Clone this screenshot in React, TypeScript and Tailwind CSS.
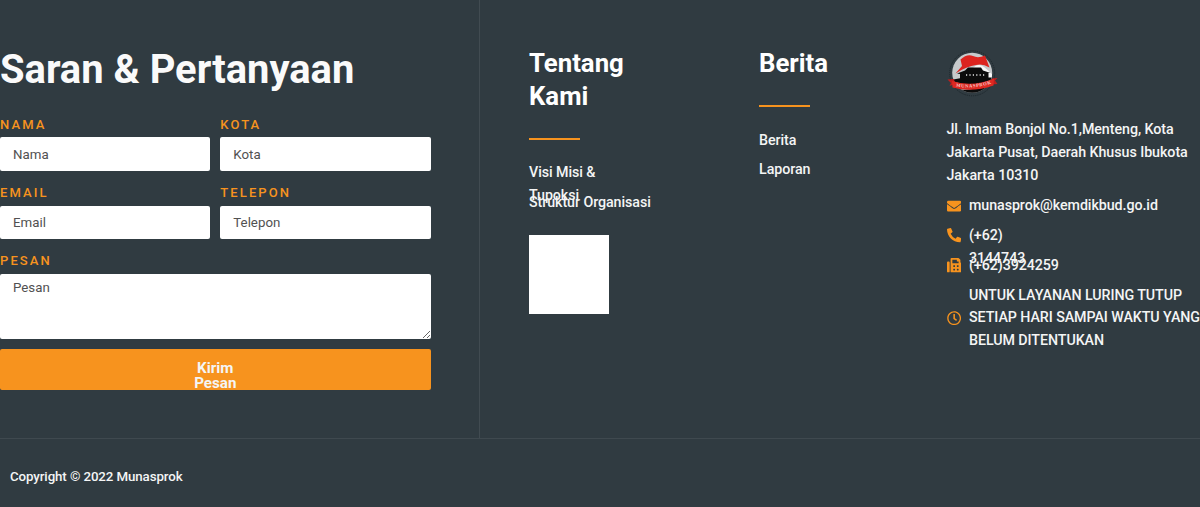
import type { ReactNode } from "react";
import { FaEnvelope, FaFax, FaPhoneAlt, FaRegClock } from "react-icons/fa";

function Label({ id, children }: { id: string; children: ReactNode }) {
  return (
    <label htmlFor={id} className="block h-[23px] text-[13px] leading-[21px] font-medium tracking-[2.1px] text-[#f7931e]">
      {children}
    </label>
  );
}

function Field({ id, label, name }: { id: string; label: string; name: string }) {
  return (
    <div className="h-[68.2px]">
      <Label id={id}>{label}</Label>
      <input
        id={id}
        placeholder={name}
        className="mt-[0.4px] block h-[33.6px] w-full rounded-[2px] bg-white px-[13px] text-[13.3px] text-[#444] placeholder:text-[#515151] outline-none"
      />
    </div>
  );
}

function Heading({ children }: { children: ReactNode }) {
  return (
    <>
      <h3 className="text-[25.75px] leading-[33.4px] font-bold tracking-normal text-white">{children}</h3>
      <div className="mt-[24.4px] mb-[21.6px] h-[2px] w-[51px] bg-[#f7931e]" />
    </>
  );
}

function Logo() {
  return (
    <svg viewBox="0 0 54 50" className="block h-[50px] w-[54px]">
      <defs>
        <clipPath id="disc">
          <circle cx="25.2" cy="24.8" r="20" />
        </clipPath>
        <path id="ribbonText" d="M9 38.5 Q25 41.5 43 36" />
      </defs>
      <circle cx="25.2" cy="25.3" r="22.5" fill="none" stroke="#1d272c" strokeWidth="1" strokeDasharray="1.2 1" />
      <circle cx="25.2" cy="24.8" r="20" fill="#c7cacc" />
      <g clipPath="url(#disc)">
        <path d="M25 21 Q31 14 37 19 T46 27 V33 H12Z" fill="#f8f8f8" />
        <path d="M3 32 L17 29.5 H48 V47 H3Z" fill="#0b0b0b" />
        <path d="M4 33 Q26 41 48 30 V35 Q25 44 8 41Z" fill="#d9dcdd" />
      </g>
      <path d="M13.5 11.5 Q20 5.5 26 8 Q31 10.5 38 7.5 L42.5 19.5 Q35 15 29 17 Q20 18 8.5 25.5 L15 18Z" fill="#dc241f" />
      <path d="M10 25.5 L18 22.5 L21 19.5 H34 L36 22.5 L43.5 25 H41.5 V33 H13 V26Z" fill="#0b0b0b" />
      <path d="M19 27H39" stroke="#e5e5e5" strokeWidth="1.5" strokeDasharray="1.2 2.2" />
      <path d="M0.5 31.5 L7 31 L8 36 L2.5 38 L4 35Z M45 30.5 L50.5 30 L48 32.5 L50.5 36 L45 36.5Z" fill="#bd1e1d" />
      <path d="M5 33 Q25 39.5 47 30.5 L46.5 37.5 Q25 45 5.5 39.5Z" fill="#de2822" />
      <text className="font-['Liberation_Serif',serif] text-[4.7px] font-bold tracking-[0.6px]" fill="#f4c9c6">
        <textPath href="#ribbonText">MUNASPROK</textPath>
      </text>
    </svg>
  );
}

function Contact({ icon, children, tall = false }: { icon: ReactNode; children: ReactNode; tall?: boolean }) {
  return (
    <li className={tall ? "flex h-[68.4px] items-center" : "flex h-[29.8px] items-start"}>
      <span className={tall ? "w-[22.5px] shrink-0 text-[14.3px] text-[#f7931e]" : "w-[22.5px] shrink-0 pt-[4.5px] text-[14.3px] text-[#f7931e]"}>
        {icon}
      </span>
      <span className="whitespace-nowrap">{children}</span>
    </li>
  );
}

export default function App() {
  return (
    <footer className="h-[507px] w-[1200px] overflow-hidden bg-[#303b41] font-['Roboto',sans-serif] text-[14.25px] leading-[22.8px] font-medium tracking-[-0.07px] text-[#f4f5f5]">
      <div className="flex h-[438.5px] border-b border-[#3f494f]">
        <section className="w-[480px] shrink-0 border-r border-[#414b51] pt-[45px]">
          <h2 className="text-[39.9px] leading-[50px] font-bold tracking-normal whitespace-nowrap text-[#fafafa]">Saran &amp; Pertanyaan</h2>
          <form className="mt-[19px] w-[430.6px] font-normal tracking-normal" onSubmit={(e) => e.preventDefault()}>
            <div className="grid grid-cols-2 gap-x-[10px]">
              <Field id="nama" label="NAMA" name="Nama" />
              <Field id="kota" label="KOTA" name="Kota" />
              <Field id="email" label="EMAIL" name="Email" />
              <Field id="telepon" label="TELEPON" name="Telepon" />
            </div>
            <Label id="pesan">PESAN</Label>
            <textarea
              id="pesan"
              placeholder="Pesan"
              className="mt-[0.4px] block h-[65.2px] w-full rounded-[2px] bg-white px-[13px] pt-[4.5px] text-[13.3px] leading-[19px] placeholder:text-[#515151] outline-none"
            />
            <button className="mt-[10px] block h-[41px] w-full overflow-hidden rounded-[2px] bg-[#f7931e] pt-[12px] text-[15.2px] leading-[15.2px] font-bold">
              Kirim
              <br />
              Pesan
            </button>
          </form>
        </section>
        <section className="w-[230px] shrink-0 pt-[47px] pl-[49px]">
          <Heading>
            Tentang
            <br />
            Kami
          </Heading>
          <ul className="-mt-[0.7px] whitespace-nowrap">
            <li className="h-[29.6px]">
              Visi Misi &amp;
              <br />
              Tupoksi
            </li>
            <li className="h-[29.6px]">Struktur Organisasi</li>
          </ul>
          <div className="mt-[14.4px] h-[79.6px] w-[79.6px] bg-white" />
        </section>
        <section className="w-[188px] shrink-0 pt-[47px] pl-[49px]">
          <Heading>Berita</Heading>
          <ul className="pt-[0.3px]">
            <li className="h-[29.6px]">Berita</li>
            <li className="h-[29.6px]">Laporan</li>
          </ul>
        </section>
        <section className="shrink-0 pt-[48px] pl-[48.5px]">
          <Logo />
          <p className="mt-[20px] tracking-[-0.05px] whitespace-nowrap">
            Jl. Imam Bonjol No.1,Menteng, Kota
            <br />
            Jakarta Pusat, Daerah Khusus Ibukota
            <br />
            Jakarta 10310
          </p>
          <ul className="mt-[7.8px]">
            <Contact icon={<FaEnvelope />}>munasprok@kemdikbud.go.id</Contact>
            <Contact icon={<FaPhoneAlt />}>
              (+62)
              <br />
              3144743
            </Contact>
            <Contact icon={<FaFax />}>(+62)3924259</Contact>
            <Contact icon={<FaRegClock />} tall>
              UNTUK LAYANAN LURING TUTUP
              <br />
              SETIAP HARI SAMPAI WAKTU YANG
              <br />
              BELUM DITENTUKAN
            </Contact>
          </ul>
        </section>
      </div>
      <p className="pt-[27px] pl-[10px] text-[13.3px] tracking-[-0.1px]">Copyright © 2022 Munasprok</p>
    </footer>
  );
}
